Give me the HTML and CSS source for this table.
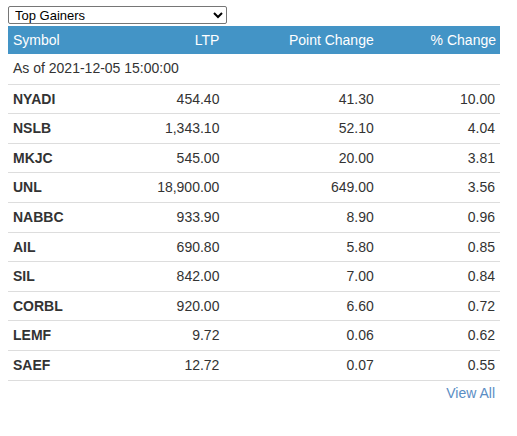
FILE: index.html
```html
<!DOCTYPE html>
<html>
<head>
<meta charset="utf-8">
<link rel="stylesheet" href="styles.css">
</head>
<body>
<div class="widget">
  <select class="picker">
    <option>Top Gainers</option>
  </select>
  <table class="grid">
    <thead>
      <tr><th class="sym">Symbol</th><th class="ltp">LTP</th><th class="pc">Point Change</th><th class="pct">% Change</th></tr>
    </thead>
    <tbody>
      <tr class="asof"><td colspan="4">As of 2021-12-05 15:00:00</td></tr>
      <tr><td class="sym">NYADI</td><td>454.40</td><td>41.30</td><td>10.00</td></tr>
      <tr><td class="sym">NSLB</td><td>1,343.10</td><td>52.10</td><td>4.04</td></tr>
      <tr><td class="sym">MKJC</td><td>545.00</td><td>20.00</td><td>3.81</td></tr>
      <tr><td class="sym">UNL</td><td>18,900.00</td><td>649.00</td><td>3.56</td></tr>
      <tr><td class="sym">NABBC</td><td>933.90</td><td>8.90</td><td>0.96</td></tr>
      <tr><td class="sym">AIL</td><td>690.80</td><td>5.80</td><td>0.85</td></tr>
      <tr><td class="sym">SIL</td><td>842.00</td><td>7.00</td><td>0.84</td></tr>
      <tr><td class="sym">CORBL</td><td>920.00</td><td>6.60</td><td>0.72</td></tr>
      <tr><td class="sym">LEMF</td><td>9.72</td><td>0.06</td><td>0.62</td></tr>
      <tr><td class="sym">SAEF</td><td>12.72</td><td>0.07</td><td>0.55</td></tr>
    </tbody>
  </table>
  <div class="more"><a href="#" class="viewall">View All</a></div>
</div>
</body>
</html>
```
FILE: styles.css
```css
html, body {
  margin: 0;
  padding: 0;
  background: #fff;
}
body {
  font-family: "Liberation Sans", Arial, sans-serif;
  font-size: 14px;
  color: #333;
}
.widget {
  width: 492px;
  padding: 6px 0 0 8px;
}
.picker {
  display: block;
  width: 219px;
  height: 18px;
  margin: 0 0 2px 0;
  padding: 0 0 0 2px;
  font-family: "Liberation Sans", Arial, sans-serif;
  font-size: 13px;
  color: #000;
  border: 1px solid #767676;
  border-radius: 2px;
  background: #fff;
}
.grid {
  width: 492px;
  border-collapse: collapse;
  table-layout: fixed;
}
.grid th {
  background: #4394c6;
  color: #fff;
  font-weight: normal;
  height: 28px;
  padding: 0 5px;
  text-align: right;
  line-height: 26px;
}
.grid th.sym { text-align: left; width: 100px; }
.grid th.ltp { width: 96px; }
.grid th.pc { width: 144px; }
.grid th.pct { width: 112px; padding-right: 4px; }
.grid td {
  padding: 5px 5px 5px;
  line-height: 18.6px;
  text-align: right;
  border-bottom: 1px solid #ddd;
  color: #333;
}
.grid td.sym {
  text-align: left;
  font-weight: bold;
}
.grid .asof td {
  text-align: left;
  padding: 5px 5px 6px;
}
.more {
  text-align: right;
  padding: 4px 5px 0 0;
}
.viewall {
  color: #5a8dc4;
  text-decoration: none;
}
```
